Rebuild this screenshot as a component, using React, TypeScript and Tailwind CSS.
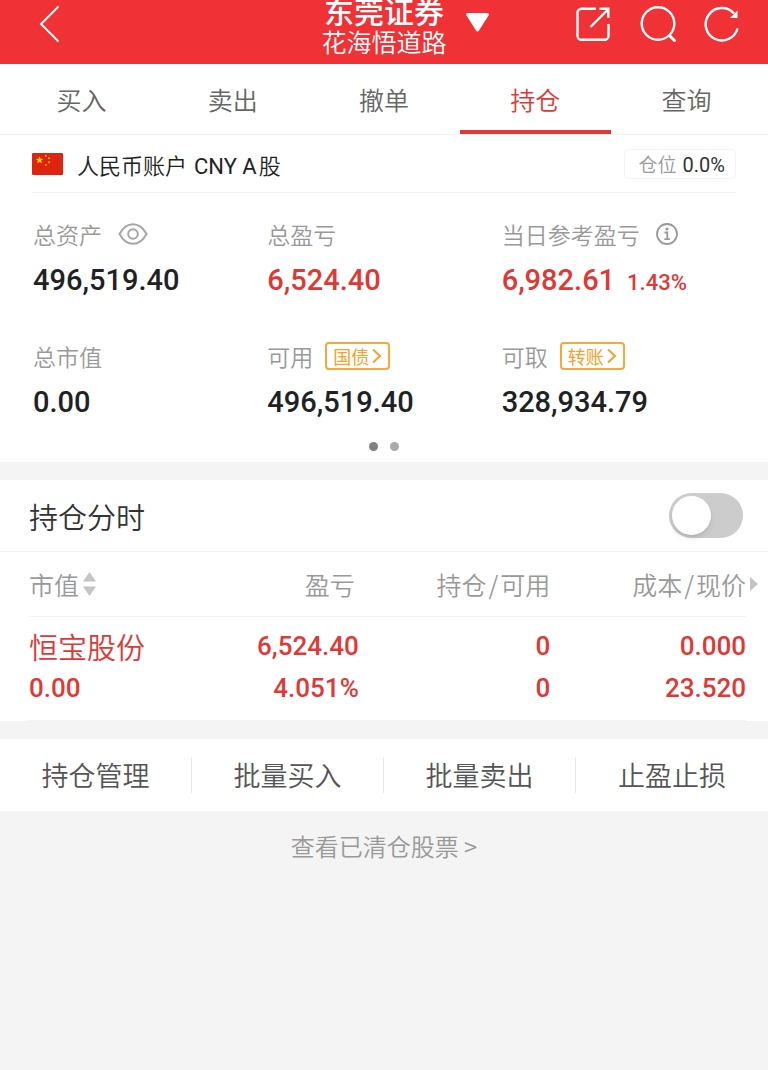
import React, { useState } from 'react';

const TABS = ['买入', '卖出', '撤单', '持仓', '查询'];
const ACTIONS = ['持仓管理', '批量买入', '批量卖出', '止盈止损'];

const BackIcon = () => (
  <svg width="22" height="38" viewBox="0 0 22 38" fill="none" stroke="white" strokeWidth="2">
    <path d="M19.500 1.500 2 19l17.500 17.500" />
  </svg>
);

const ShareIcon = () => (
  <svg width="36" height="36" viewBox="0 0 36 36" fill="none" stroke="white" strokeWidth="2.4">
    <path d="M20 2.8H5.5a4 4 0 0 0-4 4v23a4 4 0 0 0 4 4h23a4 4 0 0 0 4-4V18" />
    <path d="M14.5 21 31.5 4M23.5 2.8h8.8v9" />
  </svg>
);

const SearchIcon = () => (
  <svg width="36" height="36" viewBox="0 0 36 36" fill="none" stroke="white" strokeWidth="2.4">
    <circle cx="18" cy="17.5" r="16.3" />
    <path d="m29 29 6.5 6.5" strokeWidth="3" />
  </svg>
);

const RefreshIcon = () => (
  <svg width="36" height="36" viewBox="0 0 36 36" fill="none" stroke="white" strokeWidth="2.4">
    <path d="M33.5 22.5A16.2 16.2 0 1 1 30 7.5" />
    <path d="M33.5 4.5V12H26z" fill="white" stroke="none" />
  </svg>
);

const EyeIcon = () => (
  <svg width="30" height="22" viewBox="0 0 30 22" fill="none" stroke="#a6a6a6" strokeWidth="2">
    <path d="M1.5 11C5 4.5 9.5 1.2 15 1.2S25 4.5 28.5 11C25 17.5 20.5 20.8 15 20.8S5 17.5 1.5 11z" />
    <circle cx="15" cy="11" r="4.8" />
  </svg>
);

const InfoIcon = () => (
  <svg width="22" height="22" viewBox="0 0 22 22" fill="none" stroke="#999" strokeWidth="1.8">
    <circle cx="11" cy="11" r="10" />
    <path d="M8.5 9.5h2.8v6.5M8.3 16.2h5.6" />
    <circle cx="11" cy="6" r="1.5" fill="#999" stroke="none" />
  </svg>
);

const FlagIcon = () => (
  <svg width="31" height="22" viewBox="0 0 31 22">
    <rect width="31" height="22" rx="1" fill="#de2410" />
    <path
      d="m7.5 3.2 1 2.6 2.7.1-2.1 1.7.7 2.7-2.3-1.5-2.3 1.5.7-2.7-2.1-1.7 2.7-.1z"
      fill="#ffde00"
    />
    <g fill="#f5b400">
      <circle cx="13.8" cy="2.8" r="1" />
      <circle cx="17" cy="5.2" r="1" />
      <circle cx="17" cy="9.2" r="1" />
      <circle cx="13.8" cy="12" r="1" />
    </g>
  </svg>
);

interface StatProps {
  label: string;
  value: string;
  red?: boolean;
  percent?: string;
  children?: React.ReactNode;
}

function Stat({ label, value, red, percent, children }: StatProps) {
  return (
    <div>
      <div className="flex items-center h-8 gap-3 text-[23px] font-[350] text-[#999]">
        {label}
        {children}
      </div>
      <div
        className={`flex items-baseline gap-3 mt-3 font-[Roboto,sans-serif] text-[29px] leading-9 font-medium ${
          red ? 'text-[#e03835]' : 'text-[#1f2225]'
        }`}
      >
        {value}
        {percent && <span className="text-[22px] leading-6">{percent}</span>}
      </div>
    </div>
  );
}

function TagButton({ text }: { text: string }) {
  return (
    <button className="flex items-center gap-0.5 h-7 px-1.5 border-2 border-[#f5a93c] rounded-sm text-[18px] leading-6 font-normal text-[#f5a12c]">
      {text}
      <svg width="11" height="16" viewBox="0 0 11 16" fill="none" stroke="#f5a12c" strokeWidth="2">
        <path d="m2 1.5 7 6.5-7 6.5" />
      </svg>
    </button>
  );
}

export default function App() {
  const [tab, setTab] = useState('持仓');
  const [timeline, setTimeline] = useState(false);

  return (
    <div className="min-h-screen bg-[#f4f4f4] font-['Noto_Sans_CJK_SC',sans-serif]">
      {/* Header */}
      <header className="grid grid-cols-[1fr_auto_1fr] items-center content-center h-16 pb-4 bg-[#f03236] text-white overflow-hidden">
        <div className="flex pl-[39px]">
          <button aria-label="返回">
            <BackIcon />
          </button>
        </div>
        <div className="text-center">
          <h1 className="text-[30px] leading-[34px] font-medium">东莞证券</h1>
          <p className="text-[25px] leading-7 font-[350]">花海悟道路</p>
        </div>
        <div className="flex items-center pl-[19px] pr-7">
          <button aria-label="切换账户" className="pb-1">
            <svg width="23" height="19" viewBox="0 0 23 19" fill="white">
              <path d="M1.5 0h20q2 .5 1 2.5L13 17.5q-1.5 2-3 0L.5 2.5Q-.5.5 1.5 0z" />
            </svg>
          </button>
          <div className="flex items-center gap-7 ml-auto">
            <button aria-label="分享">
              <ShareIcon />
            </button>
            <button aria-label="搜索">
              <SearchIcon />
            </button>
            <button aria-label="刷新">
              <RefreshIcon />
            </button>
          </div>
        </div>
      </header>

      {/* Tabs */}
      <nav className="grid grid-cols-5 px-1.5 bg-white border-b border-[#eee]">
        {TABS.map((t) => (
          <button
            key={t}
            onClick={() => setTab(t)}
            className={`h-[70px] pt-1 text-[25px] leading-9 font-[350] border-b-4 ${
              t === tab ? 'text-[#e03835] border-[#e03835]' : 'text-[#666] border-transparent'
            }`}
          >
            {t}
          </button>
        ))}
      </nav>

      {/* Account overview */}
      <section className="bg-white px-8 pb-[11px]">
        <div className="flex items-center h-[58px] border-b border-[#f3f3f3]">
          <FlagIcon />
          <h2 className="ml-3.5 pt-1 text-[22px] leading-8 font-[350] text-[#222]">
            人民币账户 <span className="px-0.5 font-[Roboto,sans-serif] font-normal">CNY A</span>股
          </h2>
          <div className="flex items-center gap-1.5 h-[30px] ml-auto pt-0.5 pl-3.5 pr-2.5 border border-[#f3f3f3] rounded-sm">
            <span className="text-[19px] font-[350] text-[#999]">仓位</span>
            <span className="text-[20px] font-[Roboto,sans-serif] text-[#333]">0.0%</span>
          </div>
        </div>

        <div className="grid grid-cols-3 gap-y-[42px] pt-[25px] pl-px">
          <Stat label="总资产" value="496,519.40">
            <button aria-label="隐藏金额" className="pl-1">
              <EyeIcon />
            </button>
          </Stat>
          <Stat label="总盈亏" value="6,524.40" red />
          <Stat label="当日参考盈亏" value="6,982.61" percent="1.43%" red>
            <button aria-label="说明" className="pl-1">
              <InfoIcon />
            </button>
          </Stat>
          <Stat label="总市值" value="0.00" />
          <Stat label="可用" value="496,519.40">
            <TagButton text="国债" />
          </Stat>
          <Stat label="可取" value="328,934.79">
            <TagButton text="转账" />
          </Stat>
        </div>

        <div className="flex justify-center gap-3 mt-[22px]">
          <span className="size-[9px] rounded-full bg-[#808080]" />
          <span className="size-[9px] rounded-full bg-[#aaa]" />
        </div>
      </section>

      {/* Holdings */}
      <section className="mt-[18px] bg-white">
        <div className="flex items-center justify-between h-[72px] pl-[29px] pr-[25px] border-b border-[#f3f3f3]">
          <label htmlFor="timeline" className="text-[29px] leading-10 font-[350] text-[#333]">
            持仓分时
          </label>
          <input
            id="timeline"
            type="checkbox"
            role="switch"
            checked={timeline}
            onChange={(e) => setTimeline(e.target.checked)}
            className="appearance-none w-[74px] h-[45px] p-[3px] rounded-full bg-[#ccc] checked:bg-[#e03835] before:block before:size-[39px] before:rounded-full before:bg-white before:shadow-md checked:before:ml-auto"
          />
        </div>

        <div className="pl-[29px] pr-[22px]">
          <table className="w-full table-fixed text-right">
            <colgroup>
              <col className="w-[20%]" />
              <col className="w-[26%]" />
              <col className="w-[27%]" />
              <col className="w-[27%]" />
            </colgroup>
            <thead>
              <tr className="h-16 border-b border-[#f3f3f3] text-[25px] leading-9 text-[#999]">
                <th className="font-[350]">
                  <button className="flex items-center gap-1">
                    市值
                    <svg width="13" height="24" viewBox="0 0 13 24" fill="#c4c4c4">
                      <path d="M6.5 0 13 9.5H0zM6.5 24 13 14.5H0z" />
                    </svg>
                  </button>
                </th>
                <th className="font-[350] pr-1">盈亏</th>
                <th className="font-[350] pr-0.5">
                  持仓<span className="mx-0.5">/</span>可用
                </th>
                <th className="font-[350]">
                  <div className="flex items-center justify-end gap-1 -mr-3">
                    <span>
                      成本<span className="mx-0.5">/</span>现价
                    </span>
                    <svg width="8" height="14" viewBox="0 0 8 14" fill="#c4c4c4">
                      <path d="M0 0v14l8-7z" />
                    </svg>
                  </div>
                </th>
              </tr>
            </thead>
            <tbody className="font-[Roboto,'Noto_Sans_CJK_SC',sans-serif]">
              <tr className="border-b border-[#f3f3f3] text-[26px] leading-[42px] font-medium text-[#e03835]">
                <td className="pt-2 pb-[11px] text-left">
                  <div className="font-['Noto_Sans_CJK_SC',sans-serif] text-[29px] font-[350]">恒宝股份</div>
                  <div>0.00</div>
                </td>
                <td className="pt-2 pb-[11px]">
                  <div>6,524.40</div>
                  <div>4.051%</div>
                </td>
                <td className="pt-2 pb-[11px] pr-0.5">
                  <div>0</div>
                  <div>0</div>
                </td>
                <td className="pt-2 pb-[11px]">
                  <div>0.000</div>
                  <div>23.520</div>
                </td>
              </tr>
            </tbody>
          </table>
        </div>
      </section>

      {/* Batch actions */}
      <section className="grid grid-cols-4 mt-[18px] py-[18px] bg-white divide-x divide-[#e8e8e8]">
        {ACTIONS.map((a) => (
          <button key={a} className="h-9 text-[27px] leading-9 font-[350] text-[#555]">
            {a}
          </button>
        ))}
      </section>

      <a href="#cleared" className="block py-[17px] text-center text-[24px] leading-9 font-[350] text-[#999]">
        查看已清仓股票 &gt;
      </a>
    </div>
  );
}
